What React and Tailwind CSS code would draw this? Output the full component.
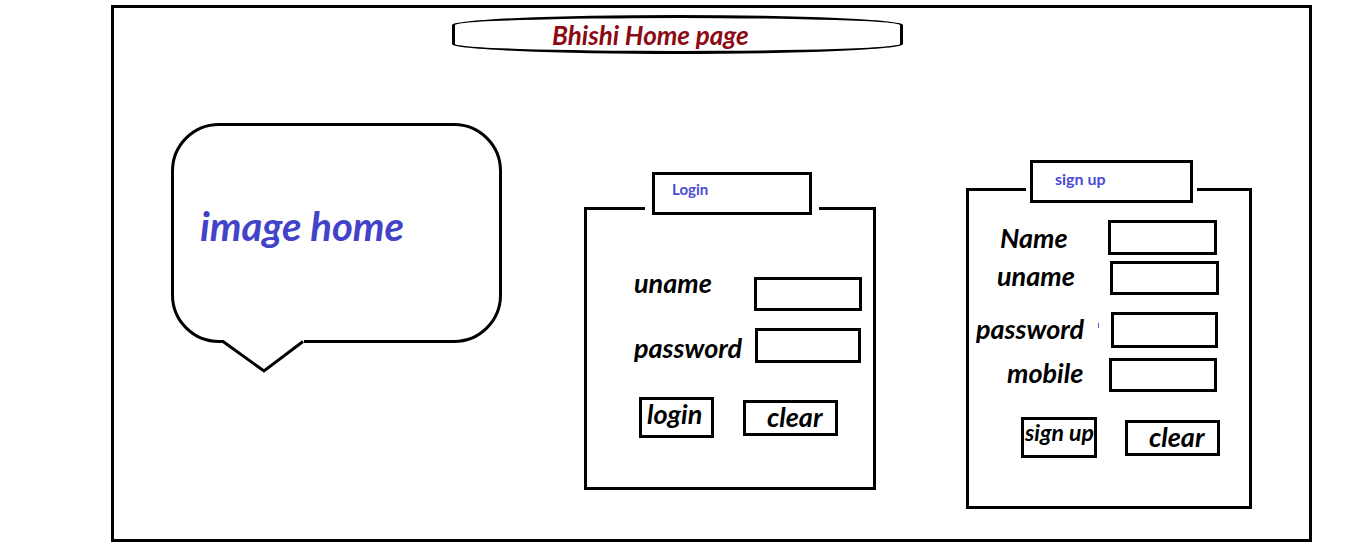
import React from "react";

const font = "font-['Lato','Liberation_Sans',sans-serif]";
const label = "font-bold italic text-[27px] leading-none text-black whitespace-nowrap";
const box = "border-[3px] border-black bg-white";

const LoginPanel = () => (
  <div className={`relative ml-[82px] mt-[153px] w-[292px] h-[283px] ${box}`}>
    <div className="absolute left-[65px] -top-[38px] w-[160px] h-[43px] border-[3px] border-black bg-white shadow-[0_0_0_7px_#fff] pl-[17px] pt-[7px]">
      <span className="block text-[15px] leading-none font-bold text-[#4b4bd6]">Login</span>
    </div>

    <div className="flex items-start mt-[67px] pl-[47px]">
      <span className={`${label} w-[120px] -mt-[8px]`}>uname</span>
      <div className={`w-[108px] h-[34px] ${box}`} />
    </div>
    <div className="flex items-start mt-[17px] pl-[47px]">
      <span className={`${label} w-[121px] mt-[6px]`}>password</span>
      <div className={`w-[106px] h-[35px] ${box}`} />
    </div>

    <div className="flex items-start mt-[34px] pl-[52px]">
      <button className={`w-[75px] h-[41px] ${box} flex items-start pl-[5px]`}>
        <span className={label}>login</span>
      </button>
      <button className={`ml-[29px] mt-[3px] w-[95px] h-[36px] ${box} flex items-start pl-[21px]`}>
        <span className={label}>clear</span>
      </button>
    </div>
  </div>
);

const SignupPanel = () => (
  <div className={`relative ml-[90px] mt-[134px] w-[286px] h-[321px] ${box}`}>
    <div className="absolute left-[61px] -top-[31px] w-[163px] h-[43px] border-[3px] border-black bg-white shadow-[0_0_0_4px_#fff] pl-[22px] pt-[8px]">
      <span className="block text-[16px] leading-none font-bold text-[#4b4bd6]">sign up</span>
    </div>

    <div className="flex items-start mt-[29px]">
      <span className={`${label} ml-[31px] mt-[4px]`}>Name</span>
      <div className={`ml-auto mr-[32px] w-[109px] h-[35px] ${box}`} />
    </div>
    <div className="flex items-start mt-[6px]">
      <span className={`${label} ml-[28px] mt-[1px]`}>uname</span>
      <div className={`ml-auto mr-[30px] w-[109px] h-[34px] ${box}`} />
    </div>
    <div className="flex items-start mt-[17px]">
      <span className={`${label} ml-[7px] mt-[3px]`}>password</span>
      <span className="ml-auto mt-[11px] w-[1px] h-[5px] bg-[#5a5ad8]" />
      <div className={`ml-[12px] mr-[31px] w-[107px] h-[36px] ${box}`} />
    </div>
    <div className="flex items-start mt-[10px]">
      <span className={`${label} ml-[38px] mt-[1px]`}>mobile</span>
      <div className={`ml-auto mr-[32px] w-[108px] h-[34px] ${box}`} />
    </div>

    <div className="flex items-start mt-[25px] pl-[52px]">
      <button className={`w-[76px] h-[41px] ${box} flex items-start pl-[1px] pt-[1px]`}>
        <span className="font-bold italic text-[23px] leading-none whitespace-nowrap">sign up</span>
      </button>
      <button className={`ml-[28px] mt-[3px] w-[95px] h-[36px] ${box} flex items-start pl-[21px]`}>
        <span className={label}>clear</span>
      </button>
    </div>
  </div>
);

export default function App() {
  return (
    <div className={`min-h-[554px] w-[1359px] bg-white pl-[111px] pt-[5px] ${font}`}>
      <div className="w-[1201px] h-[537px] border-[3px] border-black">
        {/* title pill */}
        <div className="ml-[338px] mt-[7px] w-[451px] h-[39px] border-[3px] border-black rounded-[50%/10px] flex items-center pl-[97px]">
          <span className="font-bold italic text-[26px] leading-none text-[#8b0a14]">Bhishi Home page</span>
        </div>

        <div className="flex items-start">
          {/* speech bubble */}
          <div className="relative ml-[57px] mt-[69px] w-[331px] h-[220px] border-[3px] border-black rounded-[48px] pl-[26px] pt-[80px]">
            <span className="block font-bold italic text-[40px] leading-none text-[#4343c9]">image home</span>
            <svg className="absolute left-[48px] top-[212px]" width="84" height="36" viewBox="0 0 84 36">
              <rect x="2" y="0" width="80" height="6" fill="#fff" />
              <polyline points="1,3.5 42,33 81,3.5" fill="#fff" stroke="#000" strokeWidth="3" />
            </svg>
          </div>

          <LoginPanel />
          <SignupPanel />
        </div>
      </div>
    </div>
  );
}
